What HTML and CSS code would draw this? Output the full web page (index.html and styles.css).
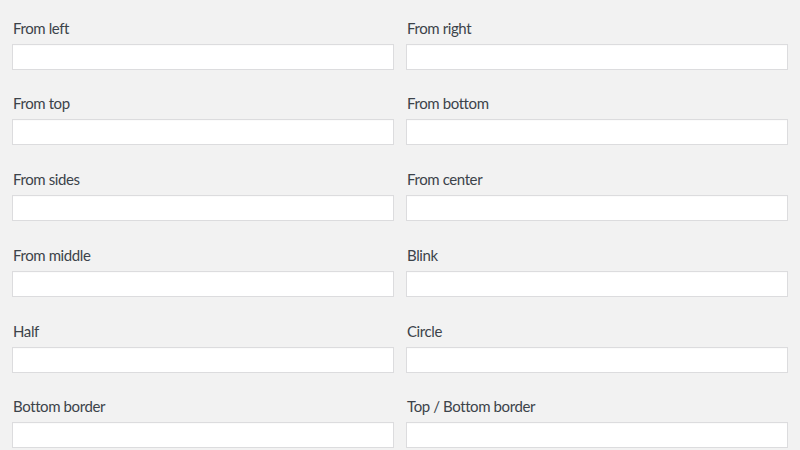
FILE: index.html
```html
<!DOCTYPE html>
<html lang="en">
<head>
<meta charset="utf-8">
<title>Form</title>
<link rel="stylesheet" href="styles.css">
</head>
<body>
<form class="form">
  <div class="field"><label class="label">From left</label><input class="input" type="text"></div>
  <div class="field"><label class="label">From right</label><input class="input" type="text"></div>
  <div class="field"><label class="label">From top</label><input class="input" type="text"></div>
  <div class="field"><label class="label">From bottom</label><input class="input" type="text"></div>
  <div class="field"><label class="label">From sides</label><input class="input" type="text"></div>
  <div class="field"><label class="label">From center</label><input class="input" type="text"></div>
  <div class="field"><label class="label">From middle</label><input class="input" type="text"></div>
  <div class="field"><label class="label">Blink</label><input class="input" type="text"></div>
  <div class="field"><label class="label">Half</label><input class="input" type="text"></div>
  <div class="field"><label class="label">Circle</label><input class="input" type="text"></div>
  <div class="field"><label class="label">Bottom border</label><input class="input" type="text"></div>
  <div class="field"><label class="label">Top / Bottom border</label><input class="input" type="text"></div>
</form>
</body>
</html>
```
FILE: styles.css
```css
html, body {
  margin: 0;
  padding: 0;
  background: #f2f2f2;
  height: 100%;
  overflow: hidden;
}
body {
  font-family: Lato, "Noto Sans", sans-serif;
  color: #3c434a;
}
.form {
  display: grid;
  grid-template-columns: 1fr 1fr;
  column-gap: 12px;
  row-gap: 23.8px;
  padding: 17.5px 12px 0;
}
.field {
  display: flex;
  flex-direction: column;
}
.label {
  font-size: 15px;
  line-height: 20px;
  letter-spacing: -0.4px;
  margin: 0 0 6px 1px;
}
.input {
  box-sizing: border-box;
  height: 26px;
  width: 100%;
  margin: 0;
  border: 1px solid #dcdcde;
  border-radius: 0;
  background: #fff;
  padding: 0 8px;
  font: inherit;
  box-shadow: inset 0 1px 1px rgba(0,0,0,0.02);
}
```
